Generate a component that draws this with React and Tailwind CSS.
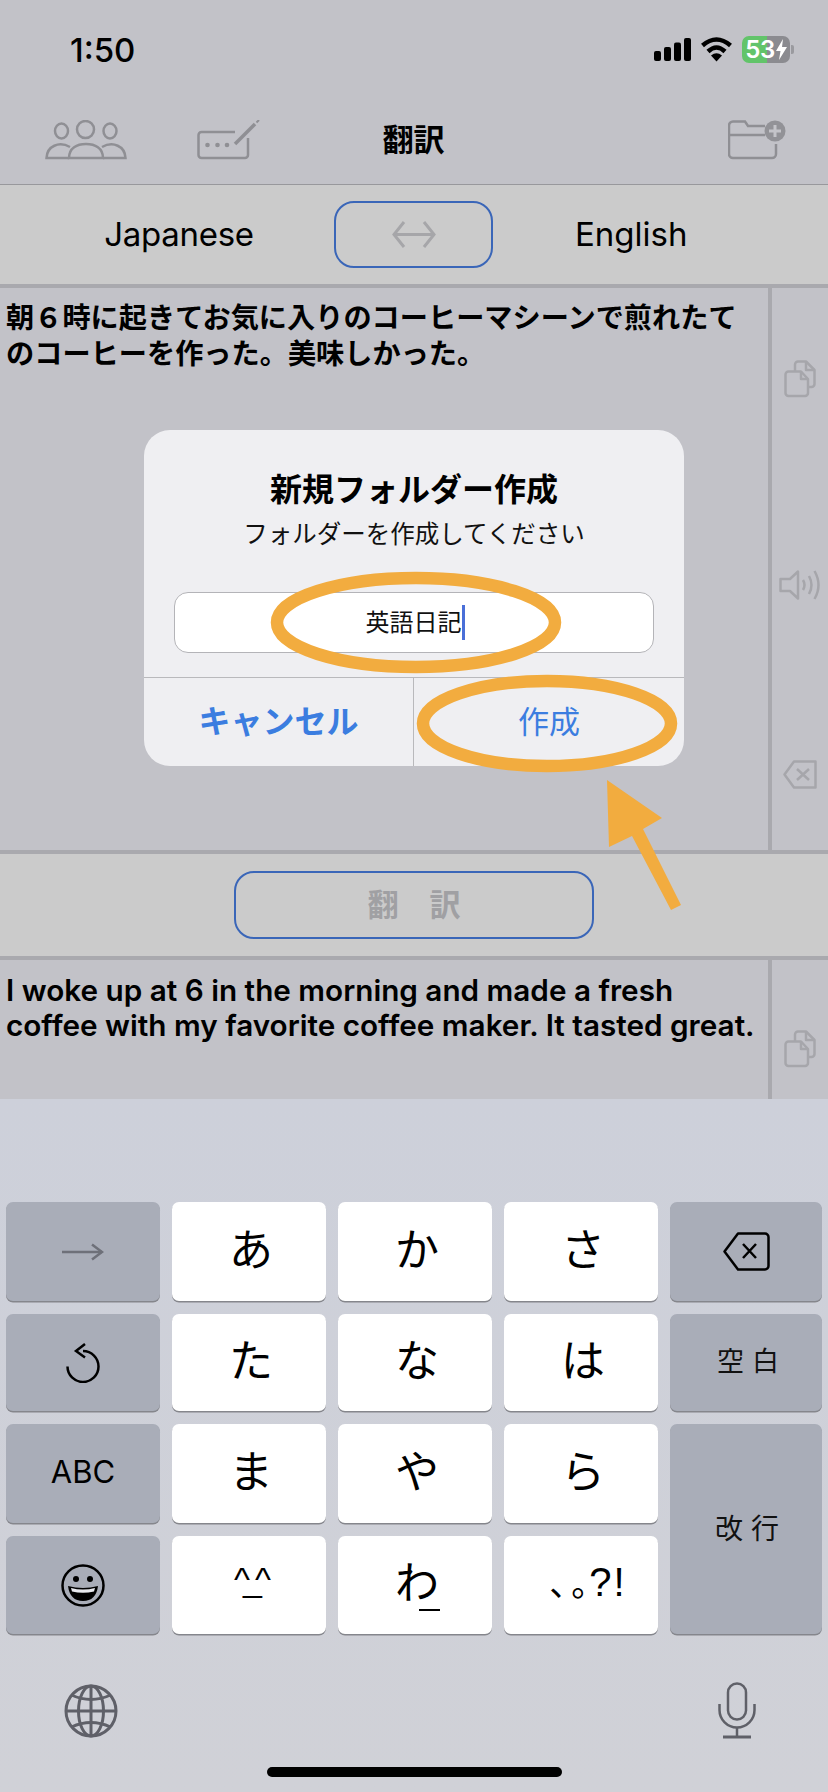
const FONT = "font-['Inter','Noto_Sans_CJK_JP',sans-serif]"

function Signal() {
  return (
    <svg width="37" height="23" viewBox="0 0 37 23" fill="#000">
      <rect x="0" y="13" width="7" height="10" rx="2" />
      <rect x="10" y="9" width="7" height="14" rx="2" />
      <rect x="20" y="4.500" width="7" height="18.500" rx="2" />
      <rect x="30" y="0" width="7" height="23" rx="2" />
    </svg>
  )
}

function Wifi() {
  return (
    <svg width="33" height="25" viewBox="0 0 32 25" fill="none" stroke="#000" strokeWidth="4.500">
      <path d="M2 8.500 Q16 -3.500 30 8.500" />
      <path d="M7.500 14.500 Q16 6.500 24.500 14.500" />
      <path d="M16 24.500 L10.500 18.500 Q16 14 21.500 18.500 Z" fill="#000" stroke="none" />
    </svg>
  )
}

function Battery() {
  return (
    <div className="flex items-center">
      <div className="flex h-[27px] w-[48px] items-center justify-center gap-[1px] rounded-[7px] bg-[linear-gradient(to_right,#62c46a_53%,#8b8b90_53%)]">
        <span className="text-[24px] font-semibold leading-none tracking-[-0.5px] text-white">53</span>
        <svg width="11" height="21" viewBox="0 0 11 21" fill="#fff">
          <path d="M7 0 L0 12 H4.500 L3 21 L11 8 H6 Z" />
        </svg>
      </div>
      <div className="ml-[1px] h-[9px] w-[3px] rounded-r-[2px] bg-[#9a9a9f]" />
    </div>
  )
}

function People() {
  return (
    <svg width="82" height="40" viewBox="0 0 82 40" fill="none" stroke="#8f8f94" strokeWidth="2.500">
      <ellipse cx="16.500" cy="11" rx="6.500" ry="7.500" />
      <ellipse cx="40.500" cy="9.500" rx="8.500" ry="8.500" />
      <ellipse cx="65" cy="11" rx="6.500" ry="7.500" />
      <path d="M24 38 C24 28 32 24 41 24 C50 24 58 28 58 38 Z" />
      <path d="M25 27 C14 21 2 26 1.500 38 H24" />
      <path d="M57 27 C68 21 80 26 80.500 38 H58" />
    </svg>
  )
}

function Compose() {
  return (
    <svg width="63" height="40" viewBox="0 0 63 40" fill="none" stroke="#8f8f94" strokeWidth="2.500">
      <path d="M38 12 H4.500 a3 3 0 0 0 -3 3 V35 a3 3 0 0 0 3 3 H48 a3 3 0 0 0 3 -3 V18" />
      <circle cx="10.500" cy="25" r="2.300" fill="#8f8f94" stroke="none" />
      <circle cx="20.500" cy="25" r="2.300" fill="#8f8f94" stroke="none" />
      <circle cx="30" cy="25" r="2.300" fill="#8f8f94" stroke="none" />
      <path d="M38 24 L58 4" strokeWidth="3.500" />
      <path d="M59.500 2.500 L62 0" strokeWidth="2" />
    </svg>
  )
}

function FolderPlus() {
  return (
    <svg width="58" height="40" viewBox="0 0 58 40" fill="none" stroke="#8f8f94" strokeWidth="2.500">
      <path d="M37 6 H20 L17 1.500 H5 a4 4 0 0 0 -4 4 V34 a4 4 0 0 0 4 4 H44 a4 4 0 0 0 4 -4 V24" />
      <path d="M1 15 H37" />
      <circle cx="47" cy="11" r="10.500" fill="#929297" stroke="none" />
      <path d="M47 5 V17 M41 11 H53" stroke="#c4c4c9" strokeWidth="3" />
    </svg>
  )
}

function SwapArrow() {
  return (
    <svg width="44" height="27" viewBox="0 0 44 27" fill="none" stroke="#a6a6a9" strokeWidth="3">
      <path d="M2 13.500 H42" />
      <path d="M12 1 L2 13.500 L12 26" />
      <path d="M32 1 L42 13.500 L32 26" />
    </svg>
  )
}

function CopyIcon() {
  return (
    <svg width="32" height="38" viewBox="0 0 32 38" fill="none" stroke="#a6a6ab" strokeWidth="2.500" strokeLinejoin="round">
      <path d="M4.500 11.500 H17 L24 19 V33 a3 3 0 0 1 -3 3 H4.500 a3 3 0 0 1 -3 -3 V14.500 a3 3 0 0 1 3 -3 Z" />
      <path d="M11 11 V4.500 a3 3 0 0 1 3 -3 H22 L30.500 10 V24 a3 3 0 0 1 -3 3 H24" />
      <path d="M17 11.500 V19 H24" />
      <path d="M22 1.500 V10 H30.500" />
    </svg>
  )
}

function SpeakerIcon() {
  return (
    <svg width="42" height="30" viewBox="0 0 42 30" fill="none" stroke="#a6a6ab" strokeWidth="2.500" strokeLinejoin="round">
      <path d="M1.500 9 H11 L19 1.500 V28.500 L11 21 H1.500 Z" />
      <path d="M24 10 Q27 15 24 20" />
      <path d="M30 6 Q35 15 30 24" />
      <path d="M35.500 1 Q43.500 15 35.500 29" />
    </svg>
  )
}

function ClearIcon() {
  return (
    <svg width="34" height="29" viewBox="0 0 34 29" fill="none" stroke="#a6a6ab" strokeWidth="2.500" strokeLinejoin="round">
      <path d="M11 1.500 H32.500 V27.500 H11 L1.500 14.500 Z" />
      <path d="M14 9 L26 20 M26 9 L14 20" />
    </svg>
  )
}

function TabArrow() {
  return (
    <svg width="42" height="18" viewBox="0 0 42 18" fill="none" stroke="#6e7079" strokeWidth="2.500">
      <path d="M0 9 H40" />
      <path d="M30 1.500 L40 9 L30 16.500" />
    </svg>
  )
}

function UndoIcon() {
  return (
    <svg width="34" height="40" viewBox="0 0 34 40" fill="none" stroke="#000" strokeWidth="2.500">
      <path d="M17 8 A15.500 15.500 0 1 1 1.500 23.500" />
      <path d="M19 1 L10 8 L19 14.500" />
    </svg>
  )
}

function EmojiIcon() {
  return (
    <svg width="44" height="43" viewBox="0 0 44 43">
      <ellipse cx="22" cy="21.500" rx="20.500" ry="20" fill="none" stroke="#000" strokeWidth="2.500" />
      <circle cx="15" cy="15" r="3" fill="#000" />
      <circle cx="29" cy="15" r="3" fill="#000" />
      <path d="M7 22 Q22 26 37 22 Q35 37 22 37 Q9 37 7 22 Z" fill="#000" />
      <path d="M10 24 Q22 27 34 24 L33 27.500 Q22 30 11 27.500 Z" fill="#e8e9ee" />
    </svg>
  )
}

function DeleteKeyIcon() {
  return (
    <svg width="47" height="39" viewBox="0 0 47 39" fill="none" stroke="#000" strokeWidth="2.500" strokeLinejoin="round">
      <path d="M15 1.500 H42 a3.500 3.500 0 0 1 3.500 3.500 V34 a3.500 3.500 0 0 1 -3.500 3.500 H15 L1.500 19.500 Z" />
      <path d="M20 12 L33 26 M33 12 L20 26" />
    </svg>
  )
}

function GlobeIcon() {
  return (
    <svg width="54" height="54" viewBox="0 0 54 54" fill="none" stroke="#5f6068" strokeWidth="3">
      <circle cx="27" cy="27" r="25" />
      <ellipse cx="27" cy="27" rx="12.500" ry="25" />
      <path d="M27 2 V52 M2 27 H52" />
      <path d="M7.500 11 Q27 20 46.500 11" />
      <path d="M7.500 43 Q27 34 46.500 43" />
    </svg>
  )
}

function MicIcon() {
  return (
    <svg width="38" height="57" viewBox="0 0 38 57" fill="none" stroke="#5f6068" strokeWidth="2.500">
      <rect x="10" y="1.500" width="18" height="36" rx="9" />
      <path d="M1.500 22 V28 a17.500 17.500 0 0 0 35 0 V22" />
      <path d="M19 46 V55" />
      <path d="M5 55 H33" strokeWidth="3" />
    </svg>
  )
}

// gray function key, white kana key
function FnKey({ className = '', children }) {
  return (
    <div className={`flex items-center justify-center rounded-[7px] bg-[#a9adb8] shadow-[0_1.500px_0_#85868c] ${className}`}>
      {children}
    </div>
  )
}

function Kana({ children }) {
  return (
    <div className="flex items-center justify-center rounded-[7px] bg-white pb-[4px] pl-[4px] text-[44px] leading-none text-black shadow-[0_1.500px_0_#85868c]">
      {children}
    </div>
  )
}

function Annotations() {
  return (
    <svg className="pointer-events-none absolute left-0 top-0" width="828" height="1792" fill="none">
      <ellipse cx="416" cy="622.500" rx="139" ry="44.500" stroke="#f2ac3f" strokeWidth="12.500" />
      <ellipse cx="547" cy="723.500" rx="124" ry="42.500" stroke="#f2ac3f" strokeWidth="12.500" />
      <path d="M607 780 L662 818 L643 829 L681 905 L671 910 L632 836 L609 847 Z" fill="#f2ac3f" />
    </svg>
  )
}

function Dialog() {
  return (
    <div className="absolute left-[144px] top-[430px] flex h-[336px] w-[540px] flex-col rounded-[26px] bg-[#efeff2]">
      <div className="flex h-[247px] flex-col items-center">
        <div className="mt-[38px] text-[32px] font-bold leading-[44px] text-black">新規フォルダー作成</div>
        <div className="mt-[1px] text-[24.500px] leading-[42px] text-[#111]">フォルダーを作成してください</div>
        <div className="mt-[37px] flex h-[61px] w-[480px] items-center justify-center rounded-[14px] border border-[#b4b4b8] bg-white pl-[2px] text-[24px] text-[#111]">
          英語日記
          <span className="h-[35px] w-[3px] bg-[#4a6fd8]" />
        </div>
      </div>
      <div className="flex flex-1 border-t border-[#b9b9bc]">
        <div className="flex w-[270px] items-center justify-center border-r border-[#b9b9bc] text-[32px] font-bold text-[#3b7de0]">キャンセル</div>
        <div className="flex flex-1 items-center justify-center text-[31px] text-[#3b7de0]">作成</div>
      </div>
    </div>
  )
}

export default function App() {
  return (
    <div className={`relative flex h-[1792px] w-[828px] flex-col overflow-hidden bg-[#c2c2c8] ${FONT}`}>
      {/* status bar */}
      <div className="flex h-[100px] items-start justify-between pl-[70px] pr-[34px] pt-[30px]">
        <span className="text-[33px] font-medium leading-[40px] text-black">1:50</span>
        <div className="flex items-center gap-[9px] pt-[6px]">
          <Signal />
          <Wifi />
          <Battery />
        </div>
      </div>

      {/* nav */}
      <div className="grid h-[84px] grid-cols-[1fr_auto_1fr] items-start pl-[45px] pr-[42px] pt-[20px]">
        <div className="flex gap-[70px]">
          <People />
          <Compose />
        </div>
        <div className="mr-[4px] text-[31px] font-bold leading-[40px] text-black">翻訳</div>
        <div className="flex justify-end">
          <FolderPlus />
        </div>
      </div>

      {/* language bar */}
      <div className="flex h-[104px] items-center border-t border-b-[4px] border-t-[#98989c] border-b-[#a9a9ae] bg-[#cbcbcb] text-[33px] text-black">
        <div className="flex w-[334px] justify-center pl-[24px] tracking-[-0.3px]">Japanese</div>
        <div className="flex h-[67px] w-[159px] items-center justify-center rounded-[20px] border-2 border-[#3a66b8]">
          <SwapArrow />
        </div>
        <div className="pl-[82px]">English</div>
      </div>

      {/* source text */}
      <div className="flex h-[562px]">
        <div className="flex-1 pl-[6px] pt-[12px] text-[28.200px] font-semibold leading-[36px] text-black">
          朝６時に起きてお気に入りのコーヒーマシーンで煎れたて
          <br />
          のコーヒーを作った。美味しかった。
        </div>
        <div className="flex w-[60px] flex-col items-center border-l-[4px] border-[#a9a9ae] pt-[72px]">
          <CopyIcon />
          <div className="mt-[172px]">
            <SpeakerIcon />
          </div>
          <div className="mt-[160px]">
            <ClearIcon />
          </div>
        </div>
      </div>

      {/* translate button */}
      <div className="flex h-[110px] items-center justify-center border-y-[4px] border-[#a9a9ae] bg-[#cbcbcb]">
        <div className="flex h-[68px] w-[360px] items-center justify-center rounded-[20px] border-2 border-[#3a66b8] text-[31px] font-bold text-[#a0a0a3]">
          翻　訳
        </div>
      </div>

      {/* translated text */}
      <div className="flex h-[139px]">
        <div className="flex-1 pl-[6px] pt-[13px] text-[29.700px] font-semibold leading-[35px] text-black">
          I woke up at 6 in the morning and made a fresh
          <br />
          coffee with my favorite coffee maker. It tasted great.
        </div>
        <div className="flex w-[60px] flex-col items-center border-l-[4px] border-[#a9a9ae] pt-[70px]">
          <CopyIcon />
        </div>
      </div>

      {/* keyboard */}
      <div className="flex flex-1 flex-col bg-[linear-gradient(#cdd0da,#d0d1d7)] pl-[6px] pr-[6px] pt-[103px]">
        <div className="grid grid-cols-[154px_154px_154px_154px_152px] grid-rows-[99px_97px_99px_98px] gap-x-[12px] gap-y-[13px]">
          <FnKey><TabArrow /></FnKey>
          <Kana>あ</Kana>
          <Kana>か</Kana>
          <Kana>さ</Kana>
          <FnKey><DeleteKeyIcon /></FnKey>

          <FnKey><UndoIcon /></FnKey>
          <Kana>た</Kana>
          <Kana>な</Kana>
          <Kana>は</Kana>
          <FnKey className="pl-[12px] text-[27px] tracking-[8px] text-[#111]">空白</FnKey>

          <FnKey className="pb-[2px] text-[31px] text-black">ABC</FnKey>
          <Kana>ま</Kana>
          <Kana>や</Kana>
          <Kana>ら</Kana>
          <FnKey className="row-span-2 pl-[10px] text-[28px] tracking-[8px] text-[#111]">改行</FnKey>

          <FnKey><EmojiIcon /></FnKey>
          <div className="flex items-center justify-center rounded-[7px] bg-white pb-[12px] font-['Liberation_Sans',sans-serif] text-[34px] leading-none tracking-[-7px] text-black shadow-[0_1.500px_0_#85868c]">
            ^_^
          </div>
          <Kana>
            <span className="relative">
              わ
              <span className="absolute left-[24px] top-[48px] h-[2px] w-[21px] bg-black" />
            </span>
          </Kana>
          <div className="flex items-center justify-center rounded-[7px] bg-white pb-[6px] leading-none text-black shadow-[0_1.500px_0_#85868c]">
            <span className="pl-[14px]">
              <span className="text-[34px] tracking-[5px]">、</span>
              <span className="text-[34px] tracking-[-16px]">。</span>
              <span className="font-['Liberation_Sans',sans-serif] text-[40px] tracking-[2px]">?!</span>
            </span>
          </div>
        </div>

        <div className="mt-[50px] flex items-start justify-between pl-[58px] pr-[66px]">
          <GlobeIcon />
          <div className="mt-[-2px]">
            <MicIcon />
          </div>
        </div>

        <div className="ml-[261px] mt-[28px] h-[10px] w-[295px] rounded-full bg-black" />
      </div>

      <Dialog />
      <Annotations />
    </div>
  )
}
